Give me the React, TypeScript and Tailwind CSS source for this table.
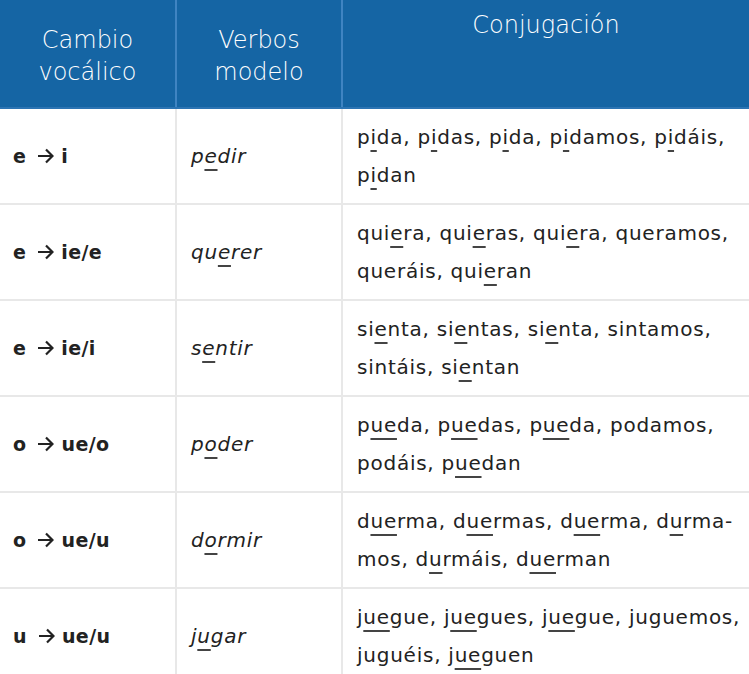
import React from 'react';

// brackets mark the letters that carry the short underline
const U: React.FC<{ text: string }> = ({ text }) => {
  const parts = text.split(/(\[[^\]]+\])/g);
  return (
    <>
      {parts.map((p, i) =>
        p.startsWith('[') ? (
          <span key={i} className="underline decoration-[1.5px] underline-offset-[6px] decoration-[#444]">
            {p.slice(1, -1)}
          </span>
        ) : (
          <React.Fragment key={i}>{p}</React.Fragment>
        )
      )}
    </>
  );
};

const Arrow = () => (
  <svg width="17" height="16" viewBox="0 0 17 16" className="inline-block ml-[11px] mr-[7px] -mt-[3px]" fill="none" stroke="#222" strokeWidth="2.2">
    <path d="M1 8h14.5M9 1.5L15.5 8 9 14.5" />
  </svg>
);

const rows = [
  { from: 'e', to: 'i', verb: 'p[e]dir', lines: ['p[i]da, p[i]das, p[i]da, p[i]damos, p[i]dáis,', 'p[i]dan'] },
  { from: 'e', to: 'ie/e', verb: 'qu[e]rer', lines: ['qui[e]ra, qui[e]ras, qui[e]ra, queramos,', 'queráis, qui[e]ran'] },
  { from: 'e', to: 'ie/i', verb: 's[e]ntir', lines: ['si[e]nta, si[e]ntas, si[e]nta, sintamos,', 'sintáis, si[e]ntan'] },
  { from: 'o', to: 'ue/o', verb: 'p[o]der', lines: ['p[ue]da, p[ue]das, p[ue]da, podamos,', 'podáis, p[ue]dan'] },
  { from: 'o', to: 'ue/u', verb: 'd[o]rmir', lines: ['d[ue]rma, d[ue]rmas, d[ue]rma, d[u]rma-', 'mos, d[u]rmáis, d[ue]rman'] },
  { from: 'u', to: 'ue/u', verb: 'j[u]gar', lines: ['j[ue]gue, j[ue]gues, j[ue]gue, juguemos,', 'juguéis, j[ue]guen'] },
];

export default function App() {
  return (
    <div className="w-[749px] h-[674px] overflow-hidden bg-white" style={{ fontFamily: '"DejaVu Sans", "Noto Sans", sans-serif' }}>
      <table className="w-[749px] border-collapse table-fixed">
        <colgroup>
          <col className="w-[176px]" />
          <col className="w-[166px]" />
          <col className="w-[407px]" />
        </colgroup>
        <thead>
          <tr className="bg-[#1565a4] text-white text-[24px] font-extralight leading-[32px] h-[108px]">
            <th className="font-extralight align-middle text-center border-r-2 border-[#3f84c2] border-b-2 border-b-[#2c74b3] pt-[4px]">
              Cambio<br />vocálico
            </th>
            <th className="font-extralight align-middle text-center border-r-2 border-[#3f84c2] border-b-2 border-b-[#2c74b3] pt-[4px]">
              Verbos<br />modelo
            </th>
            <th className="font-extralight align-top text-center pt-[9px] border-b-2 border-b-[#2c74b3]">Conjugación</th>
          </tr>
        </thead>
        <tbody className="text-[#222] text-[20px] tracking-[0.75px]">
          {rows.map((r) => (
            <tr key={r.verb} className="h-[95px] border-b-2 border-[#e8e8e8]">
              <td className="pl-[13px] font-semibold text-[19px] tracking-[0.4px] align-middle border-r-2 border-[#e8e8e8] whitespace-nowrap">
                {r.from}
                <Arrow />
                {r.to}
              </td>
              <td className="pl-[14px] italic align-middle border-r-2 border-[#e8e8e8]">
                <U text={r.verb} />
              </td>
              <td className="pl-[14px] py-[9px] leading-[38px] align-middle whitespace-nowrap">
                {r.lines.map((l, i) => (
                  <div key={i}>
                    <U text={l} />
                  </div>
                ))}
              </td>
            </tr>
          ))}
        </tbody>
      </table>
    </div>
  );
}
